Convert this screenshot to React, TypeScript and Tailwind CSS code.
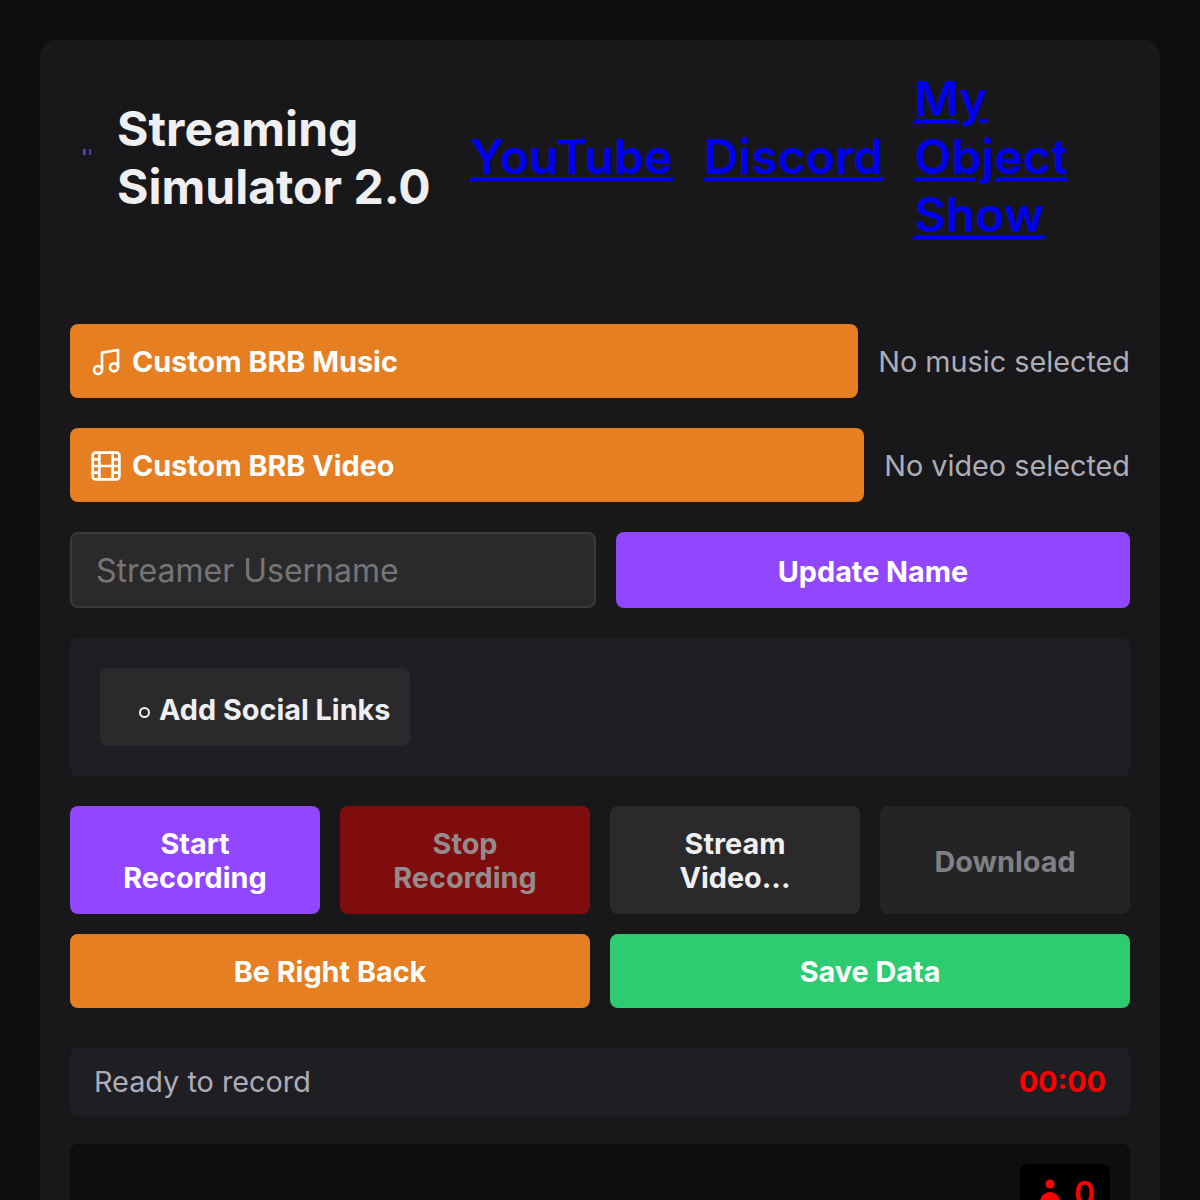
import { Music } from 'lucide-react'

const LINKS = ['YouTube', 'Discord', 'My Object Show']

function Btn({ className, children }: { className: string; children: React.ReactNode }) {
    return (
        <button className={`rounded-lg text-[28.8px] leading-[34.5px] font-bold ${className}`}>
            {children}
        </button>
    )
}

// lucide's film icon changed over versions, this is the older grid one
function FilmIcon() {
    return (
        <svg width="32" height="32" viewBox="0 0 24 24" fill="none" stroke="currentColor" strokeWidth="2" strokeLinecap="round" strokeLinejoin="round">
            <rect x="2" y="2" width="20" height="20" rx="2.18" />
            <path d="M7 2v20M17 2v20M2 12h20M2 7h5M2 17h5M17 17h5M17 7h5" />
        </svg>
    )
}

export default function App() {
    return (
        <div className="h-[1200px] overflow-hidden bg-[#0e0e10] p-10 font-['Inter',sans-serif] text-[#efeff1]">
            <div className="h-[1400px] rounded-2xl bg-[#18181b] p-[30px]">
                <header className="mb-[78px] flex h-[176px] items-center gap-10 pl-2">
                    <div className="flex items-center gap-[26px]">
                        <div className="mb-[12px] flex w-[13px] gap-[3px] pl-[5px]">
                            <span className="h-[6px] w-[3px] bg-[#5f38b0]" />
                            <span className="h-[6px] w-[3px] bg-[#5f38b0]" />
                        </div>
                        <h1 className="w-[313px] text-[48px] leading-[58px] font-bold whitespace-nowrap">Streaming<br />Simulator 2.0</h1>
                    </div>
                    <nav className="mb-[2px] flex items-center gap-[31px] text-[48px] leading-[58px] font-semibold tracking-[0.15px] text-[#0000ee] underline">
                        {LINKS.map(l => (
                            <a key={l} href="#" className={l.startsWith('My') ? 'w-[160px]' : ''}>{l}</a>
                        ))}
                    </nav>
                </header>

                <div className="flex flex-col">
                    <div className="mb-[30px] flex items-center gap-5">
                        <Btn className="flex h-[74px] flex-1 items-center gap-[10px] bg-[#e67e22] px-5 pt-[2px] text-white">
                            <Music size={32} strokeWidth={2} />
                            Custom BRB Music
                        </Btn>
                        <span className="pt-[2px] text-[28.8px] text-[#adadb8]">No music selected</span>
                    </div>
                    <div className="mb-[30px] flex items-center gap-5">
                        <Btn className="flex h-[74px] flex-1 items-center gap-[10px] bg-[#e67e22] px-5 pt-[2px] text-white">
                            <FilmIcon />
                            Custom BRB Video
                        </Btn>
                        <span className="pt-[2px] text-[28.8px] text-[#adadb8]">No video selected</span>
                    </div>
                    <div className="mb-[30px] flex gap-5">
                        <input
                            placeholder="Streamer Username"
                            className="h-[76px] min-w-0 flex-1 rounded-lg border-2 border-[#3a3a3d] bg-[#2a2a2d] px-6 text-[32px] placeholder:text-[#757575]"
                        />
                        <Btn className="h-[76px] w-[514px] shrink-0 bg-[#9147ff] pt-1 text-white">Update Name</Btn>
                    </div>
                    <div className="mb-[30px] rounded-lg bg-[#1f1f23] p-[30px]">
                        <div className="flex h-[78px] w-[310px] items-center gap-[9px] rounded-lg bg-[#2a2a2d] pt-[6px] pl-[39px] text-[28.8px] leading-[34.5px] font-bold">
                            <span className="mt-1 size-[11px] rounded-full border-2 border-[#efeff1]" />
                            Add Social Links
                        </div>
                    </div>
                    <div className="mb-5 grid grid-cols-4 gap-5">
                        <Btn className="h-[108px] bg-[#9147ff] px-8 pt-[2px] text-white">Start Recording</Btn>
                        <Btn className="h-[108px] bg-[#800d0d] px-8 pt-[2px] text-[#948c8c]">Stop Recording</Btn>
                        <Btn className="h-[108px] bg-[#2a2a2d] px-8 pt-[2px] text-[#efeff1]">Stream Video...</Btn>
                        <Btn className="h-[108px] bg-[#242427] px-8 pt-1 text-[#808083]">Download</Btn>
                    </div>
                    <div className="mb-10 grid grid-cols-2 gap-5">
                        <Btn className="h-[74px] bg-[#e67e22] pt-[2px] text-white">Be Right Back</Btn>
                        <Btn className="h-[74px] bg-[#2ecc71] pt-[2px] text-white">Save Data</Btn>
                    </div>
                    <div className="mb-7 flex h-[68px] items-center justify-between rounded-lg bg-[#1f1f23] px-6">
                        <span className="text-[28.8px] text-[#adadb8]">Ready to record</span>
                        <span className="text-[28.8px] font-bold text-[#ff0000]">00:00</span>
                    </div>
                    <div className="flex h-[400px] justify-end rounded-lg bg-[#0e0e10] p-5">
                        <div className="flex h-[60px] w-[90px] items-start gap-[14px] rounded-lg bg-black pt-[10px] pl-[20px] text-[32px] leading-[40px] font-semibold text-[#ff0000]">
                            <svg width="20" height="40" viewBox="0 0 20 40" className="mt-[4px]" fill="currentColor">
                                <circle cx="10" cy="6" r="4.5" />
                                <circle cx="10" cy="24" r="10" />
                            </svg>
                            0
                        </div>
                    </div>
                </div>
            </div>
        </div>
    )
}
